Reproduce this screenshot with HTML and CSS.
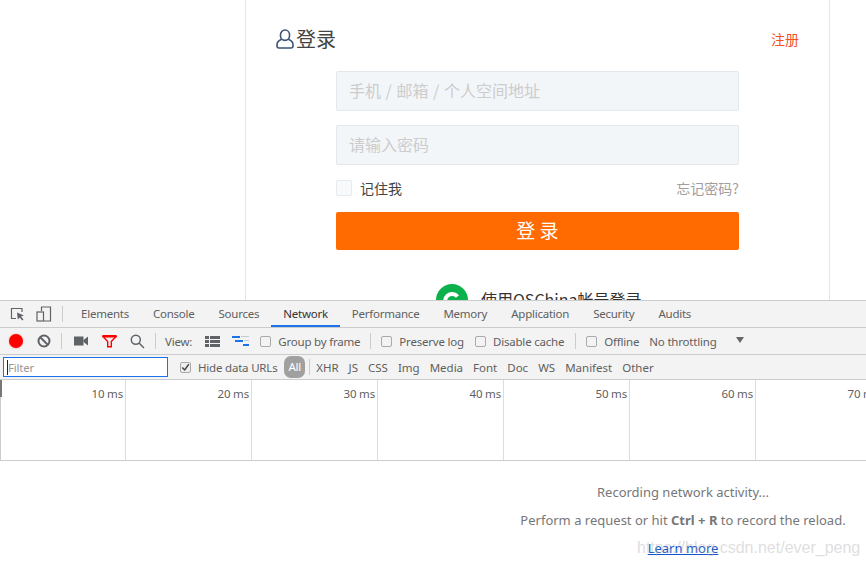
FILE: index.html
```html
<!DOCTYPE html>
<html lang="en">

<head>
    <meta charset="UTF-8">
    <title>登录</title>
    <link rel="stylesheet" href="styles.css">
</head>

<body>
    <div class="page_zone">
        <div class="login_card">
            <div class="login_head">
                <svg class="user_icon" width="18" height="20" viewBox="0 0 18 20" fill="none" stroke="#3d5474" stroke-width="1.600">
                    <ellipse cx="9" cy="6.200" rx="4.600" ry="5.200"></ellipse>
                    <path d="M5.600 10.200C3 11.200 1 13 1 15.800V17c0 1.200.9 2 2 2h12c1.100 0 2-.8 2-2v-1.200c0-2.800-2-4.600-4.600-5.600"></path>
                </svg>
                <span class="login_title">登录</span>
                <a class="register_link">注册</a>
            </div>
            <div class="login_form">
                <div class="text_input">手机 / 邮箱 / 个人空间地址</div>
                <div class="text_input">请输入密码</div>
                <div class="remember_row">
                    <span class="remember_box"></span>
                    <span class="remember_text">记住我</span>
                    <a class="forget_link">忘记密码?</a>
                </div>
                <div class="login_btn">登 录</div>
                <div class="oschina_row">
                    <svg width="32" height="32" viewBox="0 0 32 32">
                        <circle cx="16" cy="16" r="16" fill="#0db14b"></circle>
                        <path d="M21.500 12.500A7 7 0 1 0 21 22" fill="none" stroke="#fff" stroke-width="4"></path>
                    </svg>
                    <span class="oschina_text">使用OSChina帐号登录</span>
                </div>
            </div>
        </div>
    </div>

    <div class="devtools">
        <div class="tab_bar">
            <svg class="tool_icon" width="16" height="16" viewBox="0 0 16 16">
                <path d="M6 12.500H1.500V2.500H12V6" fill="none" stroke="#5f6368" stroke-width="1.200"></path>
                <path d="M7 6.500l7 3-3 1 2.500 3-1.300 1-2.400-3-2 2z" fill="#5f6368"></path>
            </svg>
            <svg class="tool_icon phone_icon" width="16" height="16" viewBox="0 0 16 16" fill="none" stroke="#5f6368" stroke-width="1.200">
                <path d="M5.500 5V1h9v14H8"></path>
                <rect x="1" y="6" width="6.500" height="9"></rect>
            </svg>
            <span class="tab_sep"></span>
            <span class="tab">Elements</span>
            <span class="tab">Console</span>
            <span class="tab">Sources</span>
            <span class="tab tab_on">Network</span>
            <span class="tab">Performance</span>
            <span class="tab">Memory</span>
            <span class="tab">Application</span>
            <span class="tab">Security</span>
            <span class="tab">Audits</span>
        </div>

        <div class="tool_bar">
            <span class="record_dot"></span>
            <svg class="clear_icon" width="14" height="14" viewBox="0 0 14 14" fill="none" stroke="#5f6368" stroke-width="2">
                <circle cx="7" cy="7" r="5.500"></circle>
                <path d="M3 3l8 8"></path>
            </svg>
            <span class="bar_sep sep_a"></span>
            <svg class="camera_icon" width="14" height="10" viewBox="0 0 14 10" fill="#5f6368">
                <rect x="0" y="0.500" width="9.500" height="9"></rect>
                <path d="M9.500 4L14 .5v9L9.500 6z"></path>
            </svg>
            <svg class="filter_icon" width="15" height="13" viewBox="0 0 15 13" fill="none" stroke="#f00" stroke-width="1.400">
                <path d="M1 1.500h13L9.300 6.500v5.300H5.700V6.500z"></path>
                <path d="M.5 1.200h14" stroke-width="2.400"></path>
            </svg>
            <svg class="search_icon" width="15" height="15" viewBox="0 0 15 15" fill="none" stroke="#5f6368" stroke-width="1.500">
                <circle cx="5.800" cy="5.800" r="4.500"></circle>
                <path d="M9 9l5 5"></path>
            </svg>
            <span class="bar_sep sep_b"></span>
            <span class="view_label">View:</span>
            <svg class="list_icon" width="15" height="11" viewBox="0 0 15 11" fill="#5f6368">
                <path d="M0 0h4v3H0zM5 0h10v3H5zM0 4h4v3H0zM5 4h10v3H5zM0 8h4v3H0zM5 8h10v3H5z"></path>
            </svg>
            <svg class="wave_icon" width="17" height="11" viewBox="0 0 17 11">
                <path d="M0 0h8v2H0zM3 4h8v2H3zM11 8h6v2h-6z" fill="#1a73e8"></path>
                <path d="M9 0h8v1H9zM12 4h5v1h-5z" fill="#bcd"></path>
            </svg>
            <label class="check_item group_item"><span class="check_box"></span>Group by frame</label>
            <span class="bar_sep"></span>
            <label class="check_item preserve_item"><span class="check_box"></span>Preserve log</label>
            <label class="check_item cache_item"><span class="check_box"></span>Disable cache</label>
            <span class="bar_sep sep_c"></span>
            <label class="check_item offline_item"><span class="check_box"></span>Offline</label>
            <span class="throttle_label">No throttling</span>
            <span class="throttle_arrow"></span>
        </div>

        <div class="filter_bar">
            <div class="filter_input"><span class="filter_caret"></span>Filter</div>
            <label class="check_item hide_item"><span class="check_box check_on">
                <svg width="11" height="11" viewBox="0 0 11 11" fill="none" stroke="#444" stroke-width="1.800"><path d="M1.500 5.500l3 3 5-7"></path></svg>
            </span>Hide data URLs</label>
            <span class="type_all">All</span>
            <span class="bar_sep sep_type"></span>
            <span class="type_item">XHR</span>
            <span class="type_item">JS</span>
            <span class="type_item">CSS</span>
            <span class="type_item">Img</span>
            <span class="type_item">Media</span>
            <span class="type_item">Font</span>
            <span class="type_item">Doc</span>
            <span class="type_item">WS</span>
            <span class="type_item">Manifest</span>
            <span class="type_item">Other</span>
        </div>

        <div class="timeline">
            <div class="time_col">10 ms</div>
            <div class="time_col">20 ms</div>
            <div class="time_col">30 ms</div>
            <div class="time_col">40 ms</div>
            <div class="time_col">50 ms</div>
            <div class="time_col">60 ms</div>
            <div class="time_col">70 ms</div>
        </div>

        <div class="empty_zone">
            <p class="empty_line">Recording network activity...</p>
            <p class="empty_line">Perform a request or hit <b>Ctrl + R</b> to record the reload.</p>
            <p class="empty_line"><a class="learn_link">Learn more</a></p>
        </div>
    </div>
    <div class="watermark">https://blog.csdn.net/ever_peng</div>
</body>

</html>
```

FILE: styles.css
```css
* {
    margin: 0;
    padding: 0;
    box-sizing: border-box;
}

html,
body {
    width: 866px;
    height: 566px;
    overflow: hidden;
    background-color: #fff;
}

body {
    position: relative;
    font-family: "Noto Sans", "Noto Sans CJK SC", sans-serif;
}

/* 登录页 */
.page_zone {
    height: 300px;
    overflow: hidden;
}

.login_card {
    width: 585px;
    height: 300px;
    margin-left: 245px;
    padding: 0 30px;
    border-left: 1px solid #dfe6ec;
    border-right: 1px solid #dfe6ec;
    font-family: "Noto Sans CJK SC", sans-serif;
}

.login_head {
    display: flex;
    align-items: center;
    height: 78px;
}

.login_title {
    margin-left: 2px;
    margin-bottom: 2px;
    font-size: 20px;
    color: #444;
}

.register_link {
    margin-left: auto;
    font-size: 14px;
    color: #f4511e;
}

.login_form {
    width: 403px;
    margin-left: 60px;
    margin-top: -7px;
}

.text_input {
    height: 40px;
    margin-bottom: 14px;
    padding-left: 12px;
    font-size: 16px;
    line-height: 36px;
    word-spacing: 1px;
    color: #ccc;
    background-color: #f3f6f9;
    border: 1px solid #e3e8ec;
    border-radius: 2px;
}

.remember_row {
    display: flex;
    align-items: center;
    height: 28px;
    margin-top: -5px;
    margin-bottom: 10px;
}

.remember_box {
    width: 16px;
    height: 16px;
    background-color: #f8f9fb;
    border: 1px solid #e6eaee;
    border-radius: 2px;
}

.remember_text {
    margin-left: 8px;
    font-size: 14px;
    color: #444;
}

.forget_link {
    margin-left: auto;
    font-size: 14px;
    color: #a39e9e;
}

.login_btn {
    height: 38px;
    font-size: 19px;
    line-height: 36px;
    text-align: center;
    color: #fff;
    background-color: #ff6b00;
    border-radius: 2px;
}

.oschina_row {
    display: flex;
    align-items: flex-start;
    margin-top: 34px;
    margin-left: 100px;
}

.oschina_text {
    margin-left: 13px;
    font-size: 16px;
    line-height: 30px;
    color: #333;
}

/* 开发者工具 */
.devtools {
    height: 266px;
    border-top: 1px solid #ccc;
    font-size: 11.5px;
    color: #5f5f5f;
    letter-spacing: -0.2px;
}

.tab_bar {
    display: flex;
    align-items: center;
    height: 27px;
    padding-left: 10px;
    background-color: #f3f3f3;
    border-bottom: 1px solid #ccc;
}

.phone_icon {
    margin-left: 10px;
}

.tab_sep {
    width: 1px;
    height: 16px;
    margin: 0 6px 0 10px;
    background-color: #ccc;
}

.tab {
    height: 26px;
    padding: 0 12px;
    line-height: 26px;
    letter-spacing: -0.24px;
}

.tab_on {
    color: #333;
    border-bottom: 2px solid #1a73e8;
}

.tool_bar {
    display: flex;
    align-items: center;
    height: 27px;
    padding-left: 9px;
    background-color: #f3f3f3;
    border-bottom: 1px solid #ccc;
}

.record_dot {
    width: 14px;
    height: 14px;
    background-color: #f00;
    border-radius: 50%;
    box-shadow: 0 0 2px #f99;
}

.clear_icon {
    margin-left: 14px;
}

.bar_sep {
    width: 1px;
    height: 16px;
    background-color: #ccc;
}

.sep_a {
    margin-left: 10px;
}

.camera_icon {
    margin-left: 12px;
}

.filter_icon {
    margin-left: 14px;
}

.search_icon {
    margin-left: 13px;
}

.sep_b {
    margin-left: 10px;
}

.view_label {
    margin-left: 9px;
}

.list_icon {
    margin-left: 13px;
}

.wave_icon {
    margin-left: 12px;
}

.check_item {
    display: flex;
    align-items: center;
}

.check_box {
    display: flex;
    align-items: center;
    justify-content: center;
    width: 11px;
    height: 11px;
    margin-right: 7px;
    background-color: #f3f3f3;
    border: 1px solid #aaa;
    border-radius: 2px;
}

.check_on {
    background-color: #eee;
}

.group_item {
    margin-left: 11px;
    margin-right: 10px;
}

.preserve_item {
    margin-left: 10px;
}

.cache_item {
    margin-left: 11px;
}

.sep_c {
    margin-left: 11px;
}

.offline_item {
    margin-left: 10px;
}

.throttle_label {
    margin-left: 10px;
}

.throttle_arrow {
    width: 0;
    height: 0;
    margin-left: 19px;
    margin-bottom: 2px;
    border-left: 4px solid transparent;
    border-right: 4px solid transparent;
    border-top: 6px solid #666;
}

.filter_bar {
    display: flex;
    align-items: center;
    height: 25px;
    padding-left: 3px;
    background-color: #f3f3f3;
    border-bottom: 1px solid #ccc;
}

.filter_input {
    display: flex;
    align-items: center;
    width: 165px;
    height: 20px;
    padding-left: 3px;
    color: #999;
    background-color: #fff;
    border: 1px solid #1a73e8;
}

.filter_caret {
    width: 1px;
    height: 15px;
    background-color: #222;
}

.hide_item {
    margin-left: 12px;
}

.type_all {
    height: 22px;
    margin-left: 7px;
    padding: 0 4px;
    line-height: 22px;
    color: #fff;
    background-color: #a0a0a0;
    border-radius: 7px;
}

.sep_type {
    margin-left: 4px;
    margin-right: 6px;
}

.type_item {
    margin-right: 10px;
    letter-spacing: 0;
}

.timeline {
    position: relative;
    display: flex;
    height: 81px;
    overflow: hidden;
    border-bottom: 1px solid #ccc;
    box-shadow: inset 1px 0 0 #ccc;
}

/* 左上角的刻度 */
.timeline::before {
    content: "";
    position: absolute;
    left: 0;
    top: 0;
    width: 2px;
    height: 17px;
    background-color: #777;
}

.time_col {
    flex: 0 0 126px;
    padding: 6px 2px 0 0;
    text-align: right;
    border-right: 1px solid #ddd;
}

.empty_zone {
    padding-top: 22px;
    padding-left: 500px;
    text-align: center;
    font-size: 13px;
    letter-spacing: 0;
    color: #777;
}

.empty_line {
    height: 28px;
    line-height: 18px;
}

.learn_link {
    color: #1155cc;
    text-decoration: underline;
}

.watermark {
    position: absolute;
    left: 637px;
    top: 539px;
    font-family: "Liberation Sans", sans-serif;
    font-size: 16px;
    color: rgba(170, 170, 170, 0.4);
}
```
